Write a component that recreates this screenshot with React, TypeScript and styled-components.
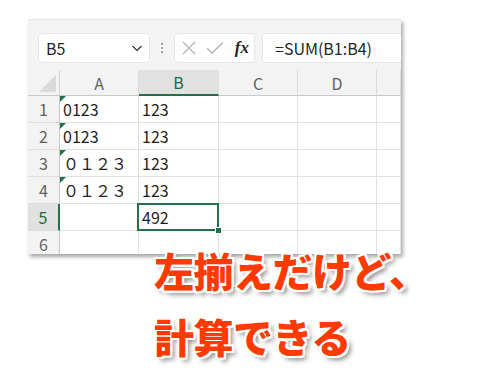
import React from 'react';
import styled, { createGlobalStyle } from 'styled-components';

const GlobalStyle = createGlobalStyle`
  html, body {
    margin: 0;
    padding: 0;
    background: #ffffff;
  }
  body {
    width: 492px;
    height: 391px;
    overflow: hidden;
    font-family: "Noto Sans CJK JP", "Noto Sans", sans-serif;
  }
`;

const Page = styled.div`
  display: flex;
  flex-direction: column;
  padding: 19px 0 0 28px;
`;

const Window = styled.div`
  width: 373px;
  height: 235px;
  overflow: hidden;
  background: #ffffff;
  box-shadow: 2px 3px 4px rgba(0, 0, 0, 0.35);
`;

const Toolbar = styled.div`
  display: flex;
  align-items: center;
  height: 51px;
  padding: 13px 0 8px 10px;
  box-sizing: border-box;
  overflow: hidden;
  background: #f3f3f3;
  border-top: 1px solid #e4e4e4;
`;

const Box = styled.div<{ $width: number }>`
  display: flex;
  align-items: center;
  flex-shrink: 0;
  width: ${(p) => p.$width}px;
  height: 30px;
  box-sizing: border-box;
  background: #ffffff;
  border: 1px solid #e6e6e6;
  border-radius: 4px;
`;

const NameText = styled.span`
  flex: 1;
  padding-left: 7px;
  font-size: 16px;
  color: #262626;
`;

const Chevron = styled.svg`
  width: 12px;
  height: 12px;
  margin-right: 6px;
`;

const Grip = styled.div`
  display: flex;
  flex-direction: column;
  flex-shrink: 0;
  gap: 2px;
  width: 24px;
  align-items: center;
  & > i {
    width: 2px;
    height: 2px;
    background: #8a8a8a;
    border-radius: 1px;
  }
`;

const FxButtons = styled.div`
  display: flex;
  align-items: center;
  gap: 10px;
  padding-left: 7px;
`;

const Fx = styled.span`
  margin: 0 5px 0 auto;
  font-family: "Liberation Serif", serif;
  font-style: italic;
  font-weight: bold;
  font-size: 17px;
  color: #262626;
`;

const Formula = styled(Box)`
  margin-left: 7px;
  border-right: 0;
  border-radius: 4px 0 0 4px;
`;

const FormulaText = styled.span`
  padding-left: 12px;
  font-size: 16px;
  color: #262626;
  white-space: nowrap;
`;

const Sheet = styled.div`
  display: grid;
  grid-template-columns: 32px 79px 80px 79px 79px 24px;
  grid-auto-rows: 27px;
  grid-template-rows: 26px;
  line-height: 18px;
`;

const Corner = styled.div`
  position: relative;
  background: #f3f3f3;
  border-right: 1px solid #d4d4d4;
  border-bottom: 1px solid #c8c8c8;
  &::after {
    content: '';
    position: absolute;
    right: 3px;
    bottom: 3px;
    border-left: 17px solid transparent;
    border-bottom: 17px solid #dadada;
  }
`;

const ColHead = styled.div<{ $active?: boolean }>`
  display: flex;
  align-items: center;
  justify-content: center;
  font-size: 16px;
  color: ${(p) => (p.$active ? '#1d6b3f' : '#616161')};
  background: ${(p) => (p.$active ? '#e1e1e1' : '#f3f3f3')};
  border-right: 1px solid #dcdcdc;
  border-bottom: ${(p) => (p.$active ? '2px solid #217346' : '1px solid #c8c8c8')};
`;

const RowHead = styled.div<{ $active?: boolean }>`
  display: flex;
  align-items: center;
  justify-content: center;
  font-size: 16px;
  color: ${(p) => (p.$active ? '#1d6b3f' : '#616161')};
  background: ${(p) => (p.$active ? '#e1e1e1' : '#f3f3f3')};
  border-right: ${(p) => (p.$active ? '2px solid #217346' : '1px solid #c8c8c8')};
  border-bottom: 1px solid #dcdcdc;
  box-sizing: border-box;
`;

const Cell = styled.div<{ $flag?: boolean; $selected?: boolean }>`
  position: relative;
  display: flex;
  align-items: center;
  padding-left: 3px;
  font-size: 16px;
  color: #1f1f1f;
  border-right: 1px solid #e1e1e1;
  border-bottom: 1px solid #e1e1e1;
  white-space: nowrap;
  &::before {
    content: ${(p) => (p.$flag ? "''" : 'none')};
    position: absolute;
    left: 0;
    top: 0;
    border-top: 6px solid #217346;
    border-right: 6px solid transparent;
  }
  &::after {
    content: ${(p) => (p.$selected ? "''" : 'none')};
    position: absolute;
    left: -2px;
    top: -1px;
    right: -1px;
    bottom: -1px;
    border: 2px solid #217346;
  }
`;

const Handle = styled.span`
  position: absolute;
  right: -4px;
  bottom: -4px;
  width: 5px;
  height: 5px;
  background: #217346;
  border: 1px solid #ffffff;
  z-index: 1;
`;

const Caption = styled.div`
  display: flex;
  flex-direction: column;
  gap: 26px;
  margin: -4px 0 0 126px;
  font-family: "Noto Sans CJK JP", sans-serif;
  font-weight: 900;
  font-size: 40px;
  line-height: 40px;
  letter-spacing: -0.5px;
  color: #ff3a00;
  text-shadow:
    2px 0 0 #fff, -2px 0 0 #fff, 0 2px 0 #fff, 0 -2px 0 #fff,
    2px 2px 0 #fff, -2px -2px 0 #fff, 2px -2px 0 #fff, -2px 2px 0 #fff,
    4px 4px 5px rgba(0, 0, 0, 0.45);
`;

const cols = ['A', 'B', 'C', 'D', ''];

const rows: { a: string; b: string; flag: boolean }[] = [
  { a: '0123', b: '123', flag: true },
  { a: '0123', b: '123', flag: true },
  { a: '０１２３', b: '123', flag: true },
  { a: '０１２３', b: '123', flag: true },
  { a: '', b: '492', flag: false },
  { a: '', b: '', flag: false },
];

export default function App() {
  return (
    <>
      <GlobalStyle />
      <Page>
        <Window>
          <Toolbar>
            <Box $width={112}>
              <NameText>B5</NameText>
              <Chevron viewBox="0 0 12 12">
                <path d="M1.5 4 L6 8.5 L10.5 4" fill="none" stroke="#333" strokeWidth="1.2" />
              </Chevron>
            </Box>
            <Grip>
              <i />
              <i />
              <i />
            </Grip>
            <Box $width={81}>
              <FxButtons>
                <svg width="14" height="14" viewBox="0 0 14 14">
                  <path d="M1 1 L13 13 M13 1 L1 13" stroke="#b3b3b3" strokeWidth="1.3" />
                </svg>
                <svg width="18" height="14" viewBox="0 0 18 14">
                  <path d="M1 7 L6 12 L17 1.5" fill="none" stroke="#b3b3b3" strokeWidth="1.3" />
                </svg>
              </FxButtons>
              <Fx>fx</Fx>
            </Box>
            <Formula $width={160}>
              <FormulaText>=SUM(B1:B4)</FormulaText>
            </Formula>
          </Toolbar>
          <Sheet>
            <Corner />
            {cols.map((c, i) => (
              <ColHead key={i} $active={c === 'B'}>
                {c}
              </ColHead>
            ))}
            {rows.map((r, i) => (
              <React.Fragment key={i}>
                <RowHead $active={i === 4}>{i + 1}</RowHead>
                <Cell $flag={r.flag}>{r.a}</Cell>
                <Cell $selected={i === 4}>
                  {r.b}
                  {i === 4 && <Handle />}
                </Cell>
                <Cell />
                <Cell />
                <Cell />
              </React.Fragment>
            ))}
          </Sheet>
        </Window>
        <Caption>
          <span>左揃えだけど、</span>
          <span>計算できる</span>
        </Caption>
      </Page>
    </>
  );
}
